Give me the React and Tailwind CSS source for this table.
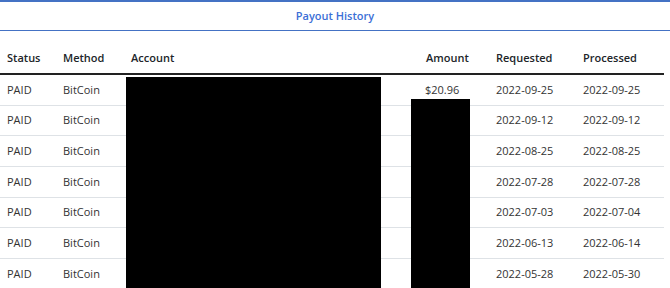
const rows = [
  ['2022-09-25', '2022-09-25', '$20.96'],
  ['2022-09-12', '2022-09-12', ''],
  ['2022-08-25', '2022-08-25', ''],
  ['2022-07-28', '2022-07-28', ''],
  ['2022-07-03', '2022-07-04', ''],
  ['2022-06-13', '2022-06-14', ''],
  ['2022-05-28', '2022-05-30', ''],
];

const cols = 'grid grid-cols-[56px_68px_295px_70px_87px_88px]';

export default function App() {
  return (
    <div className="relative w-[670px] h-[288px] overflow-hidden bg-white text-[11px] text-[#212529] font-['Open_Sans',sans-serif]">
      <div className="h-[31px] border-t-2 border-b border-[#4472c4] flex items-center justify-center">
        <span className="font-semibold text-[#3b6fd6]">Payout History</span>
      </div>
      <div className="w-[664px]">
        <div className={`${cols} h-[44px] items-end pb-[7px] border-b-2 border-[#222] font-semibold`}>
          <div className="pl-[7px]">Status</div>
          <div className="pl-[7px]">Method</div>
          <div className="pl-[7px]">Account</div>
          <div className="pl-[7px]">Amount</div>
          <div className="pl-[7px]">Requested</div>
          <div className="pl-[7px]">Processed</div>
        </div>
        {rows.map(([req, proc, amt], i) => (
          <div key={i} className={`${cols} h-[30.67px] items-center border-b border-[#dee2e6] text-[#333]`}>
            <div className="pl-[7px]">PAID</div>
            <div className="pl-[7px]">BitCoin</div>
            <div className="pl-[7px]"></div>
            <div className="pl-[6px]">{amt}</div>
            <div className="pl-[7px]">{req}</div>
            <div className="pl-[7px]">{proc}</div>
          </div>
        ))}
      </div>
      <div className="absolute left-[126px] top-[77px] w-[255px] h-[211px] bg-black" />
      <div className="absolute left-[411px] top-[99px] w-[59px] h-[189px] bg-black" />
    </div>
  );
}
